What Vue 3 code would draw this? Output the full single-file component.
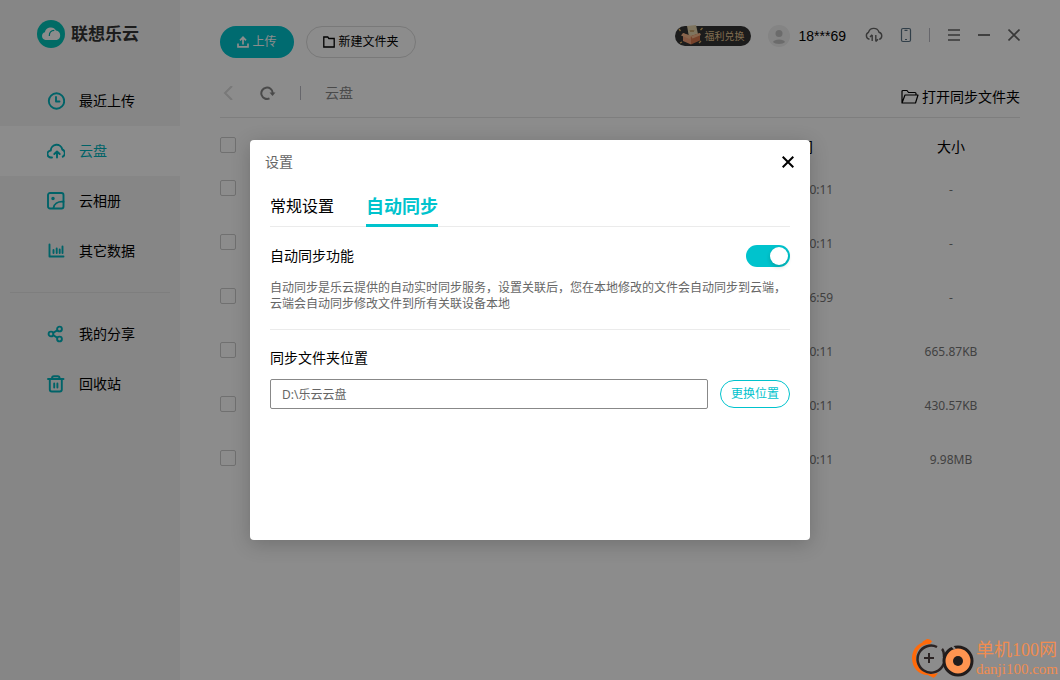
<script setup>
import { ref } from 'vue'

const mainNav = [
  { id: 'recent', label: '最近上传' },
  { id: 'cloud', label: '云盘', active: true },
  { id: 'album', label: '云相册' },
  { id: 'data', label: '其它数据' },
]
const moreNav = [
  { id: 'share', label: '我的分享' },
  { id: 'trash', label: '回收站' },
]
const rows = [
  { time: '2022-02-16 10:11', size: '-' },
  { time: '2022-02-16 10:11', size: '-' },
  { time: '2022-02-15 16:59', size: '-' },
  { time: '2022-02-16 10:11', size: '665.87KB' },
  { time: '2022-02-16 10:11', size: '430.57KB' },
  { time: '2022-02-16 10:11', size: '9.98MB' },
]
const autoSync = ref(true)
const folder = ref('D:\\乐云云盘')
</script>

<template>
  <div class="app">
    <aside class="sidebar">
      <div class="brand">
        <svg width="28" height="28" viewBox="0 0 28 28">
          <circle cx="14" cy="14" r="14" fill="#00c3b8" />
          <path d="M8.500 20a4 4 0 0 1-.6-7.800A6 6 0 0 1 19 10.500a4.900 4.900 0 0 1 .8 9.500z" fill="#fff" />
          <path d="M12.300 16c0-3.500 1.800-5.500 5-5.600" fill="none" stroke="#00b3aa" stroke-width="1.200" />
        </svg>
        <span>联想乐云</span>
      </div>
      <nav>
        <template v-for="(group, g) in [mainNav, moreNav]" :key="g">
          <hr v-if="g" class="split" />
          <a v-for="item in group" :key="item.id" href="#" class="nav-item" :class="{ active: item.active }">
            <svg width="18" height="18" viewBox="0 0 18 18" fill="none" stroke="currentColor" stroke-width="1.900" stroke-linecap="round" stroke-linejoin="round">
              <template v-if="item.id === 'recent'">
                <circle cx="9.500" cy="9" r="7.700" /><path d="M9 5v4.500h3.500" />
              </template>
              <template v-else-if="item.id === 'cloud'">
                <path d="M5 15.500H4a3.500 3.500 0 0 1-.2-7A5.800 5.800 0 0 1 15.300 7.500a4 4 0 0 1 .5 7.200" />
                <path d="M10 15.500V9.700M7.300 12 10 9.500l2.700 2.500" />
              </template>
              <template v-else-if="item.id === 'album'">
                <rect x="1" y="1" width="15.500" height="15.500" rx="2" />
                <circle cx="6" cy="6.500" r=".8" fill="currentColor" />
                <path d="M6.500 16c.5-3.800 4-6.800 10-6.300" />
              </template>
              <template v-else-if="item.id === 'data'">
                <path d="M2.500 2.500v12h14M6.500 8v3M9.700 6.500V11M12.700 7.500V11M15.500 4.500V11" />
              </template>
              <template v-else-if="item.id === 'share'">
                <circle cx="4" cy="9" r="2.400" /><circle cx="12.500" cy="4" r="2.400" /><circle cx="12.500" cy="14" r="2.400" />
                <path d="M6.300 7.700 10.200 5.400M6.300 10.300l3.900 2.300" />
              </template>
              <template v-else>
                <path d="M1 4h15.500M2.800 4v10.500a2 2 0 0 0 2 2h8a2 2 0 0 0 2-2V4M5 3.500c0-1.500.8-2.300 2-2.300h3.600c1.200 0 2 .8 2 2.300M7.200 8.500v4M10.400 8.500v4" />
              </template>
            </svg>
            <span>{{ item.label }}</span>
          </a>
        </template>
      </nav>
    </aside>

    <main class="content">
      <header class="topbar">
        <button class="pill primary">
          <svg width="12" height="12" viewBox="0 0 12 12" fill="none" stroke="currentColor" stroke-width="1.700">
            <path d="M6 8.500V1.500M3 4.300l3-3 3 3M1 7.500v3.300h10V7.500" />
          </svg>
          <span>上传</span>
        </button>
        <button class="pill outline">
          <svg width="12" height="12" viewBox="0 0 12 12" fill="none" stroke="currentColor" stroke-width="1.300">
            <path d="M.8 1h4l1 1.500h5.400v8.500H.8z" />
          </svg>
          <span>新建文件夹</span>
        </button>
        <div class="account">
          <button class="welfare">
            <svg width="28" height="22" viewBox="0 0 28 22">
              <path d="M12 1l9-1 2 9-9 3z" fill="#e8d5ad" />
              <path d="M15 5l1 2 1-2 1 2 1-2" fill="none" stroke="#c39a61" />
              <path d="M8 8l8 3v8.500L8 16z" fill="#f2a078" />
              <path d="M16 11l9-3v7.500l-9 4z" fill="#d9794e" />
              <path d="M8 8 6 10.500l8.500 3.500 1.500-3zM25 8l1 2-8.500 3.500-1.500-2.500z" fill="#f7b98c" />
              <path d="M4 4l1.500 2M5 18l2-1M25.500 5l2-2M24 18l2-2" stroke="#e3b668" stroke-width="1.300" />
            </svg>
            <span>福利兑换</span>
          </button>
          <svg class="avatar" width="22" height="22" viewBox="0 0 22 22">
            <circle cx="11" cy="11" r="11" fill="#f0f0f0" />
            <circle cx="11" cy="8.500" r="3.500" fill="#c3c3c3" />
            <path d="M5 17c1-3.500 11-3.500 12 0-2 2.500-10 2.500-12 0z" fill="#c3c3c3" />
          </svg>
          <span class="user">18***69</span>
        </div>
        <div class="window-tools">
          <button aria-label="传输列表">
            <svg width="18" height="16" viewBox="0 0 18 16" fill="none" stroke="currentColor" stroke-width="1.400">
              <path d="M4.500 12.300A3.700 3.700 0 0 1 3.500 5.300 5.500 5.500 0 0 1 14 5.200a3.700 3.700 0 0 1 .2 7.100M7.200 14V8M5 10l2.200-2.300M10.800 8v6.500M13 12.300l-2.200 2.300" />
            </svg>
          </button>
          <button aria-label="手机" class="phone">
            <svg width="12" height="16" viewBox="0 0 12 16" fill="none" stroke="currentColor" stroke-width="1.200">
              <rect x="1.500" y="1.500" width="9" height="13" rx="1.500" /><path d="M4.500 3.300h3M5 12.500h2" />
            </svg>
          </button>
          <i class="bar"></i>
          <button aria-label="菜单">
            <svg width="12" height="12" viewBox="0 0 12 12" stroke="currentColor" stroke-width="1.700"><path d="M0 1h12M0 6h12M0 11h12" /></svg>
          </button>
          <button aria-label="最小化">
            <svg width="12" height="12" viewBox="0 0 12 12" stroke="currentColor" stroke-width="1.800"><path d="M0 6h12" /></svg>
          </button>
          <button aria-label="关闭窗口">
            <svg width="12" height="12" viewBox="0 0 12 12" stroke="currentColor" stroke-width="1.600"><path d="M.5.500l11 11M11.500.500l-11 11" /></svg>
          </button>
        </div>
      </header>

      <div class="pathbar">
        <button class="back" aria-label="返回">
          <svg width="16" height="14" viewBox="0 0 16 14" fill="none" stroke="currentColor" stroke-width="2"><path d="M12 0 5 7l7 7" /></svg>
        </button>
        <button class="reload" aria-label="刷新">
          <svg width="16" height="14" viewBox="0 0 16 14" fill="none" stroke="currentColor" stroke-width="2">
            <path d="M9.500 12.400A5.700 5.700 0 1 1 12.700 7" /><path d="M9.500 6.500h6l-3 3.500z" fill="currentColor" stroke="none" />
          </svg>
        </button>
        <i class="bar"></i>
        <span class="crumb">云盘</span>
        <a href="#" class="open-folder">
          <svg width="18" height="16" viewBox="0 0 18 16" fill="none" stroke="currentColor" stroke-width="1.200" stroke-linejoin="round">
            <path d="M1 14V2.500q0-1 1-1h4l1.500 2H14q1 0 1 1V6M1 14l3-8h13l-2.500 8z" />
          </svg>
          <span>打开同步文件夹</span>
        </a>
      </div>

      <table class="files">
        <thead>
          <tr>
            <th class="pick"><input type="checkbox" aria-label="全选" /></th>
            <th></th>
            <th class="time">修改时间</th>
            <th class="size">大小</th>
          </tr>
        </thead>
        <tbody>
          <tr v-for="(row, i) in rows" :key="i">
            <td class="pick"><input type="checkbox" aria-label="选择文件" /></td>
            <td></td>
            <td>{{ row.time }}</td>
            <td>{{ row.size }}</td>
          </tr>
        </tbody>
      </table>
    </main>

    <div class="mask">
      <section class="dialog" role="dialog" aria-labelledby="dialog-title">
        <header class="dialog-head">
          <span id="dialog-title">设置</span>
          <button aria-label="关闭">
            <svg width="12" height="12" viewBox="0 0 12 12" stroke="currentColor" stroke-width="2"><path d="M.7.700l10.600 10.600M11.300.700.7 11.300" /></svg>
          </button>
        </header>
        <div class="dialog-body">
          <div class="tabs">
            <button>常规设置</button>
            <button class="current">自动同步</button>
          </div>
          <div class="sync">
            <label for="auto-sync">自动同步功能</label>
            <input id="auto-sync" v-model="autoSync" type="checkbox" class="switch" />
          </div>
          <p class="hint">自动同步是乐云提供的自动实时同步服务，设置关联后，您在本地修改的文件会自动同步到云端，云端会自动同步修改文件到所有关联设备本地</p>
          <label for="folder" class="folder-label">同步文件夹位置</label>
          <div class="folder-row">
            <input id="folder" v-model="folder" type="text" readonly />
            <button>更换位置</button>
          </div>
        </div>
      </section>
    </div>

    <div class="watermark">
      <svg width="64" height="42" viewBox="0 0 64 42" fill="none">
        <path d="M22 3C10 2 2 10 2 20c0 10 7 17 16 17l7 2 3-4c-12 3-22-4-22-15C6 12 11 6 20 6z" fill="#ff6a0a" />
        <path d="M12 4l5-3q4 0 5 3zM18 37l7-1-1 4z" fill="#ff6a0a" />
        <path d="M27 9A13.500 13.500 0 1 0 32 29c4-5 3-9 6-13q2-3 5-4" stroke="#2b2323" stroke-width="2.500" />
        <path d="M32 11q2 2 2 8" stroke="#2b2323" stroke-width="2.500" />
        <path d="M19 15v10M14 20h10" stroke="#2b2323" stroke-width="2" />
        <circle cx="48" cy="23" r="14" fill="#ff9450" stroke="#211c1c" stroke-width="3" />
        <path d="M41 7l4 4" stroke="#8c8c8c" stroke-width="2" />
        <circle cx="48" cy="23" r="5" fill="#211c1c" />
      </svg>
      <div class="mark-text">
        <div class="mark-name">单机100网</div>
        <div class="mark-site">danji100.com</div>
      </div>
    </div>
  </div>
</template>

<style>
body {
  margin: 0;
}
</style>

<style scoped>
* {
  box-sizing: border-box;
}
.app {
  position: relative;
  display: flex;
  min-height: 100vh;
  background: #fff;
  color: #000;
  font: 14px/20px "Noto Sans", "Noto Sans CJK SC", sans-serif;
}
button {
  padding: 0;
  border: 0;
  background: none;
  color: inherit;
  font: inherit;
  cursor: pointer;
}
a {
  color: inherit;
  text-decoration: none;
}
svg {
  display: block;
  flex: none;
}
.sidebar {
  width: 180px;
  flex: none;
  background: #f4f4f4;
}
.brand {
  display: flex;
  align-items: center;
  gap: 6px;
  height: 76px;
  padding: 0 0 8px 37px;
  color: #333;
  font-size: 17px;
  font-weight: 700;
}
.nav-item {
  display: flex;
  align-items: center;
  gap: 14px;
  height: 50px;
  padding-left: 47px;
}
.nav-item svg {
  color: #00b4be;
}
.nav-item.active {
  background: #fff;
  color: #00b4be;
}
.split {
  height: 1px;
  margin: 16px 10px;
  border: 0;
  background: #e6e6e6;
}
.content {
  flex: 1;
  min-width: 0;
  padding: 26px 40px 0;
}
.topbar {
  display: flex;
  gap: 12px;
  height: 50px;
}
.pill {
  display: flex;
  align-items: center;
  justify-content: center;
  gap: 3px;
  height: 32px;
  border-radius: 16px;
  font-size: 12px;
}
.primary {
  width: 74px;
  background: #00c3cd;
  color: #fff;
}
.outline {
  width: 110px;
  border: 1px solid #dcdcdc;
}
.account {
  display: flex;
  align-items: center;
  height: 20px;
  margin-left: auto;
}
.welfare {
  display: flex;
  align-items: center;
  width: 76px;
  height: 20px;
  border-radius: 10px;
  background: #333;
  color: #e8c794;
  font-size: 10px;
  white-space: nowrap;
}
.welfare span {
  margin-left: 2px;
}
.avatar {
  margin: 0 9px 0 17px;
}
.user {
  font-family: "Liberation Sans", sans-serif;
}
.window-tools {
  display: flex;
  align-items: center;
  gap: 18px;
  height: 18px;
  margin-left: 7px;
  color: #666;
}
.phone {
  color: #5a7385;
}
.window-tools .phone {
  margin: 0 -1px;
}
.bar {
  width: 1px;
  height: 14px;
  background: #bbbbc4;
}
.pathbar {
  display: flex;
  align-items: center;
  height: 42px;
  padding-bottom: 8px;
  border-bottom: 1px solid #e6e6e6;
  color: #888;
}
.back {
  color: #dcdcdc;
}
.reload {
  margin: 0 24px;
}
.crumb {
  margin-left: 24px;
}
.open-folder {
  display: flex;
  align-items: center;
  gap: 3px;
  margin-left: auto;
  padding-top: 8px;
  color: #000;
}
.files {
  width: 100%;
  border-collapse: collapse;
  table-layout: fixed;
  color: #777;
  font-size: 12px;
  text-align: center;
}
.files th,
.files td {
  height: 54px;
  padding: 0;
}
.files th {
  height: 45px;
  padding-top: 12px;
  color: #000;
  font-size: 14px;
  font-weight: 400;
}
.files .pick {
  width: 40px;
  padding-bottom: 4px;
  text-align: left;
}
.files .time {
  width: 194px;
}
.files .size {
  width: 138px;
}
.pick input {
  display: block;
  appearance: none;
  width: 16px;
  height: 16px;
  margin: 0;
  border: 1px solid #ccc;
  border-radius: 2px;
}
.mask {
  position: absolute;
  inset: 0;
  display: flex;
  align-items: center;
  justify-content: center;
  background: rgba(0, 0, 0, 0.45);
}
.dialog {
  width: 560px;
  min-height: 400px;
  border-radius: 4px;
  background: #fff;
  box-shadow: 0 4px 20px rgba(0, 0, 0, 0.2);
}
.dialog-head {
  display: flex;
  align-items: center;
  justify-content: space-between;
  height: 44px;
  padding: 0 16px 0 15px;
  color: #666;
}
.dialog-head button {
  color: #000;
}
.dialog-body {
  padding: 0 20px;
}
.tabs {
  display: flex;
  gap: 32px;
  height: 43px;
  border-bottom: 1px solid #ebebeb;
  font-size: 16px;
}
.tabs button {
  height: 43px;
}
.tabs .current {
  padding-top: 3px;
  border-bottom: 3px solid #00c3cd;
  color: #00c3cd;
  font-size: 18px;
  font-weight: 700;
}
.sync {
  display: flex;
  align-items: center;
  justify-content: space-between;
  height: 58px;
}
.switch {
  display: flex;
  appearance: none;
  width: 44px;
  height: 22px;
  margin: 0;
  padding: 2px;
  border-radius: 11px;
  background: #c8c8c8;
}
.switch::before {
  content: "";
  width: 18px;
  height: 18px;
  border-radius: 9px;
  background: #fff;
  box-shadow: 0 2px 4px rgba(0, 35, 11, 0.2);
}
.switch:checked {
  justify-content: flex-end;
  background: #00c3cd;
}
.hint {
  margin: -5px 0 18px;
  padding-bottom: 17px;
  border-bottom: 1px solid #ebebeb;
  color: #666;
  font-size: 12px;
  line-height: 16px;
}
.folder-label {
  display: block;
  margin-bottom: 11px;
}
.folder-row {
  display: flex;
  align-items: center;
  gap: 12px;
}
.folder-row input {
  flex: 1;
  min-width: 0;
  height: 30px;
  padding: 0 11px;
  border: 1px solid #888;
  border-radius: 2px;
  color: #666;
  font: 12px/16px "Noto Sans", "Noto Sans CJK SC", sans-serif;
}
.folder-row button {
  width: 70px;
  height: 28px;
  border: 1px solid #00c3cd;
  border-radius: 14px;
  color: #00c3cd;
  font-size: 12px;
}
.watermark {
  position: absolute;
  right: 2px;
  bottom: 0;
  display: flex;
  align-items: center;
  gap: 2px;
  color: #f08c50;
  font-family: "Liberation Serif", "Noto Sans CJK SC", serif;
  white-space: nowrap;
}
.mark-name {
  font-size: 18px;
  line-height: 20px;
}
.mark-site {
  font-size: 15px;
  line-height: 18px;
}
</style>
